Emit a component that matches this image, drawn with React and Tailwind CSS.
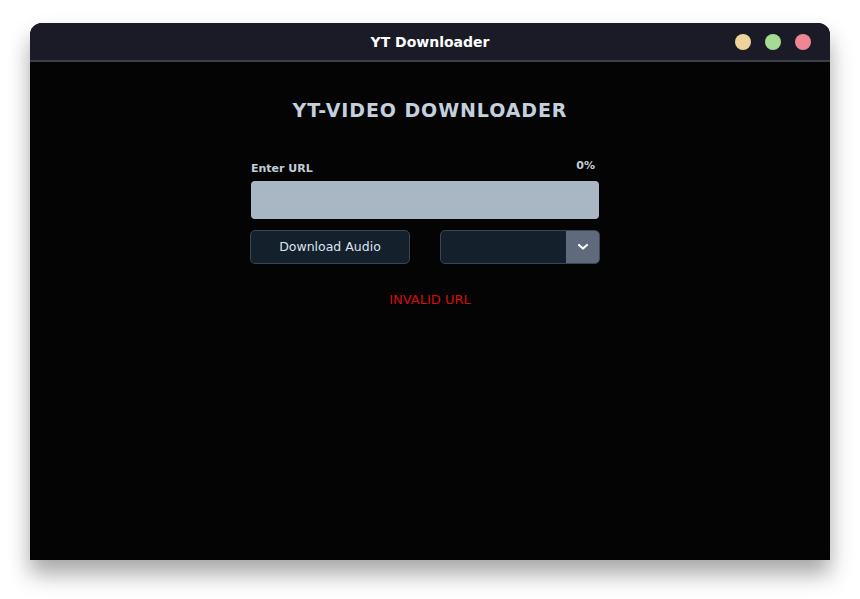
import React from "react";

export default function App() {
  const font = { fontFamily: '"DejaVu Sans", "Inter", sans-serif' };
  return (
    <div className="w-[860px] h-[599px] bg-white pt-[23px] pl-[30px]" style={font}>
      <div className="w-[800px] h-[537px] flex flex-col bg-[#040404] rounded-t-[12px] shadow-[0_14px_22px_rgba(0,0,0,0.35)]">
        <div className="h-[39px] flex items-center relative bg-[#1a1b27] rounded-t-[12px] border-b-2 border-[#3b3f48]">
          <div className="flex-1 text-center text-white text-[14px] font-semibold pt-[2px]">YT Downloader</div>
          <div className="absolute right-[19px] top-[11px] flex gap-[14px]">
            <span className="w-[16px] h-[16px] rounded-full bg-[#efd39c]" />
            <span className="w-[16px] h-[16px] rounded-full bg-[#a5db92]" />
            <span className="w-[16px] h-[16px] rounded-full bg-[#ee8693]" />
          </div>
        </div>
        <div className="flex flex-col items-center pt-[34px]">
          <h1 className="text-[19px] font-extrabold text-[#c5d0de] tracking-[0.9px]">YT-VIDEO DOWNLOADER</h1>
          <div className="w-[350px] mt-[36px] mr-[10px]">
            <div className="flex justify-between items-end pl-[1px] pr-[5px]">
              <span className="text-[11px] font-semibold text-[#c3ccd8]">Enter URL</span>
              <span className="text-[11px] font-semibold text-[#c3ccd8] relative -top-[3px]">0%</span>
            </div>
            <div className="mt-[4px] ml-[1px] w-[348px] h-[38px] rounded-[4px] bg-[#a9b6c4]" />
            <div className="mt-[11px] flex justify-between">
              <button className="w-[160px] h-[34px] rounded-[5px] bg-[#14202c] border border-[#3a4652] text-[#dbe4ee] text-[12.5px]">Download Audio</button>
              <div className="w-[160px] h-[34px] rounded-[5px] bg-[#14202c] border border-[#3a4652] flex overflow-hidden">
                <div className="flex-1" />
                <div className="w-[33px] bg-[#5f6b7c] flex items-center justify-center">
                  <svg width="12" height="8" viewBox="0 0 12 8"><path d="M2 2l4 3.5L10 2" stroke="#fff" strokeWidth="2.2" fill="none" strokeLinecap="round" strokeLinejoin="round" /></svg>
                </div>
              </div>
            </div>
            <div className="mt-[26px] ml-[10px] text-center text-[13px] text-[#d40d0d]">INVALID URL</div>
          </div>
        </div>
      </div>
    </div>
  );
}
